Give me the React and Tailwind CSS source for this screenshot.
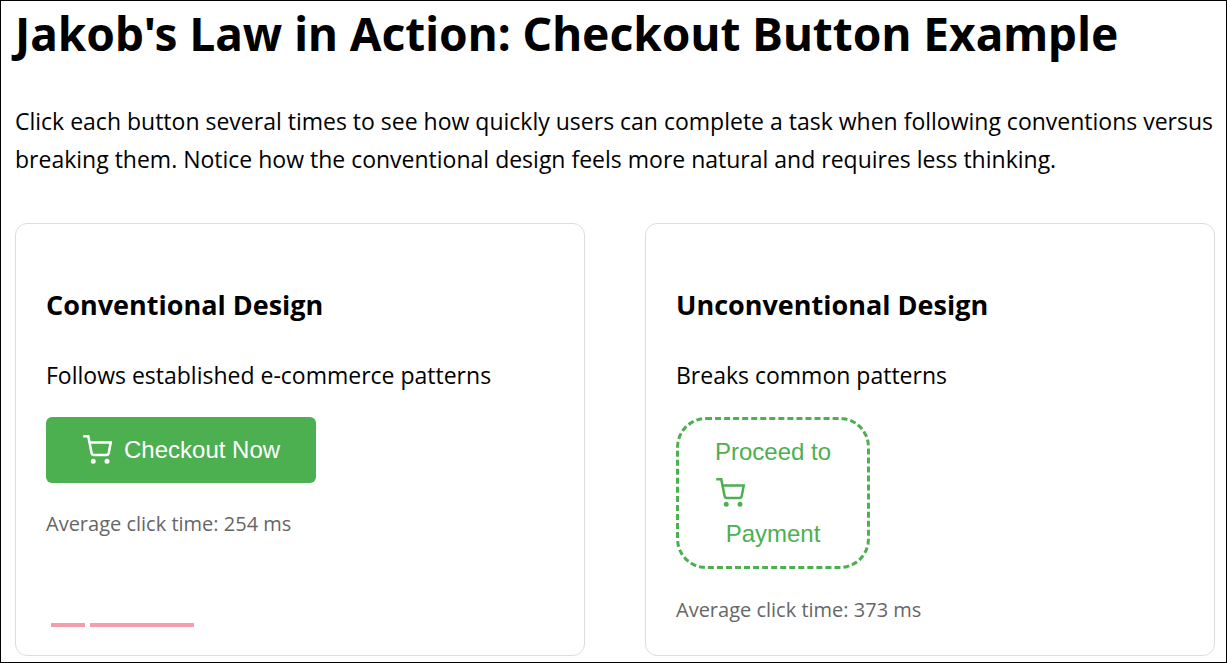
function CartIcon() {
  return (
    <svg
      className="size-[30px] shrink-0"
      viewBox="0 0 24 24"
      fill="none"
      stroke="currentColor"
      strokeWidth="2"
      aria-hidden="true"
    >
      <circle cx="9" cy="21" r="1" />
      <circle cx="20" cy="21" r="1" />
      <path d="M1 1h4l2.68 13.39a2 2 0 0 0 2 1.61h9.72a2 2 0 0 0 2-1.61L23 6H6" />
    </svg>
  );
}

function DesignCard({ title, description, time, children, footer }) {
  return (
    <section className="flex flex-col items-start rounded-xl border border-[#dddddd] px-[30px] pt-[61px] pb-7">
      <h2 className="text-[27px] leading-10 font-bold">{title}</h2>
      <p className="mt-[31px] text-[23px] leading-[38px]">{description}</p>
      <div className="mt-[23px]">{children}</div>
      <p className="mt-6 text-[20px] leading-[34px] text-[#666666]">{time}</p>
      {footer}
    </section>
  );
}

export default function App() {
  return (
    <main className="min-h-screen border border-black bg-white pr-[11px] pb-[6px] pl-[14px] font-['Open_Sans','Noto_Sans',sans-serif] text-black">
      <h1 className="font-['Noto_Sans','Open_Sans',sans-serif] text-[46px] leading-[64px] font-bold">
        Jakob's Law in Action: Checkout Button Example
      </h1>
      <p className="mt-[37px] text-[23px] leading-[38px]">
        Click each button several times to see how quickly users can complete a task when following conventions versus
        breaking them. Notice how the conventional design feels more natural and requires less thinking.
      </p>
      <div className="mt-[45px] grid grid-cols-2 gap-[60px]">
        <DesignCard
          title="Conventional Design"
          description="Follows established e-commerce patterns"
          time="Average click time: 254 ms"
          footer={
            <div className="mt-auto flex gap-[5px] pl-[5px]">
              <div className="h-1 w-[34px] bg-[#f59dab]" />
              <div className="h-1 w-[104px] bg-[#f59dab]" />
            </div>
          }
        >
          <button
            type="button"
            className="flex items-center gap-3 rounded-md bg-[#4caf50] px-9 py-[18px] font-['Liberation_Sans',Arial,sans-serif] text-2xl leading-7 text-white"
          >
            <CartIcon />
            Checkout Now
          </button>
        </DesignCard>
        <DesignCard
          title="Unconventional Design"
          description="Breaks common patterns"
          time="Average click time: 373 ms"
        >
          <button
            type="button"
            className="flex flex-col items-start gap-3 rounded-[30px] border-3 border-dashed border-[#4caf50] px-9 py-[18px] font-['Liberation_Sans',Arial,sans-serif] text-2xl leading-7 text-[#4caf50]"
          >
            <span>Proceed to</span>
            <CartIcon />
            <span className="self-center">Payment</span>
          </button>
        </DesignCard>
      </div>
    </main>
  );
}
